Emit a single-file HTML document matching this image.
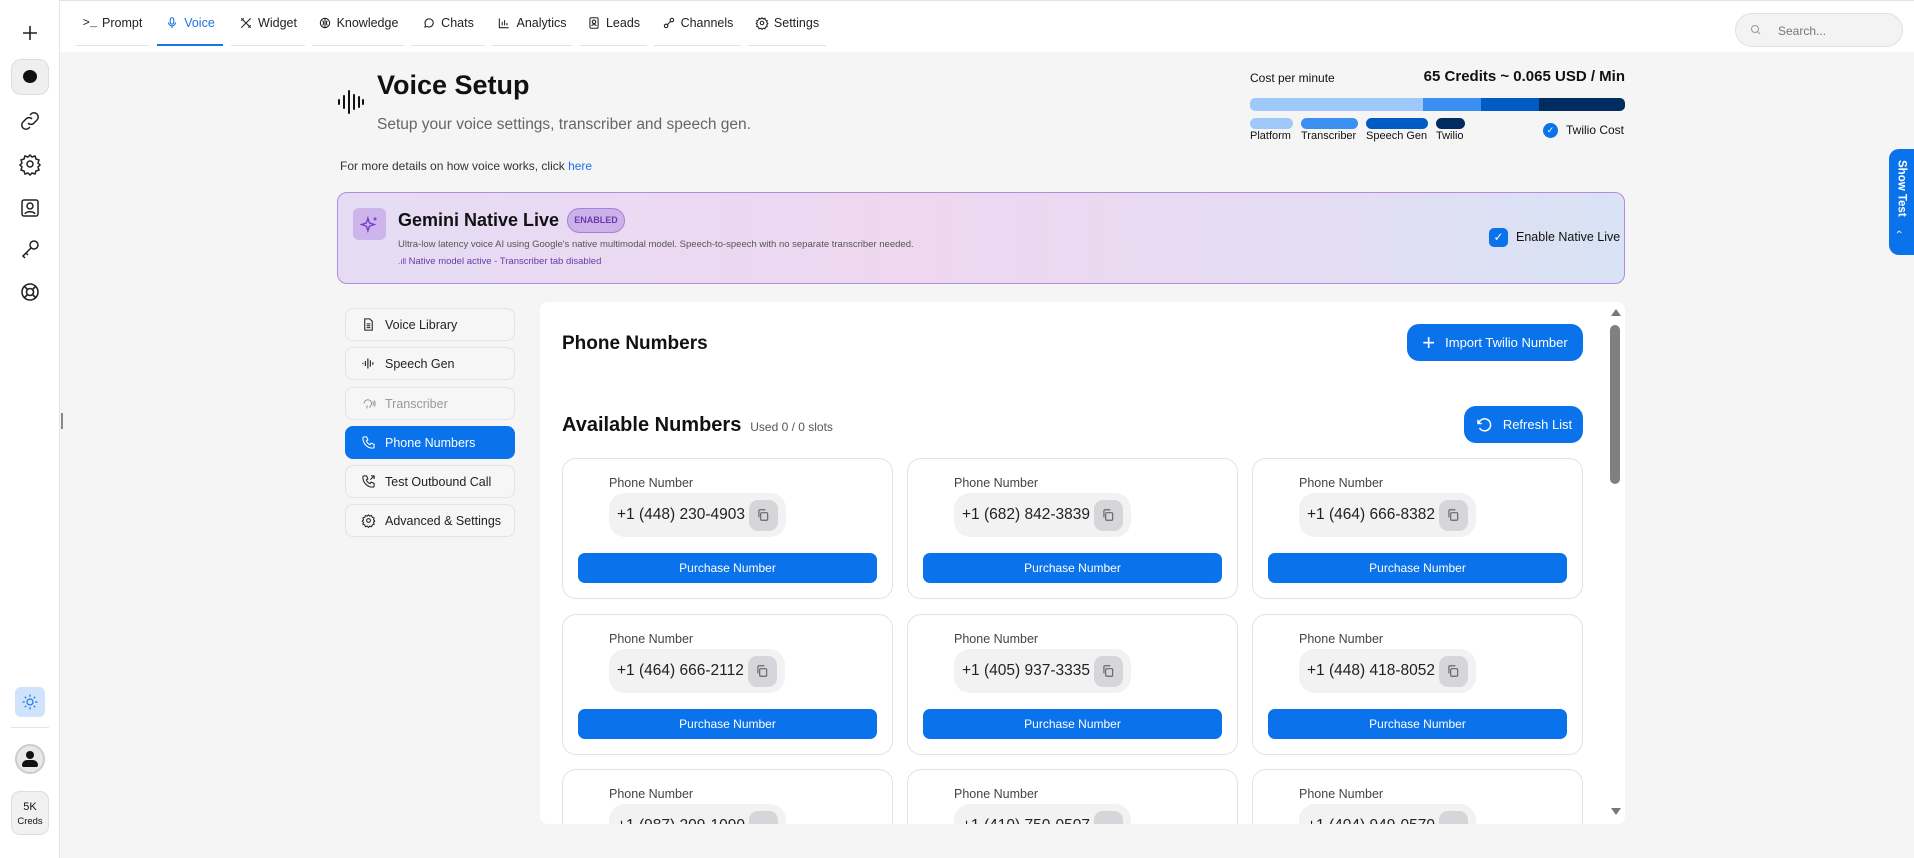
<!DOCTYPE html>
<html style="overflow:hidden;width:1914px;height:858px"><head><meta charset="utf-8"><style>
*{box-sizing:border-box;margin:0;padding:0}
body{width:1914px;height:858px;overflow:hidden;background:#f5f5f5;font-family:"Liberation Sans",sans-serif;color:#111;position:relative}
.abs{position:absolute}
.side{left:0;top:0;width:60px;height:858px;background:#fff;border-right:1px solid #e5e5e5}
.top{left:60px;top:0;width:1854px;height:52px;background:#fff;border-top:1px solid #e3e3e3}
.tab{position:absolute;top:0;height:45px;display:flex;align-items:center;justify-content:center;gap:5px;font-size:12.5px;color:#222;border-bottom:1px solid #e3e3e3}
.tab.on{color:#1a73e8;border-bottom:2px solid #1a73e8}
.tab svg{width:14px;height:14px}
.nav{position:absolute;left:345px;width:170px;height:33px;border:1px solid #e3e3e3;border-radius:8px;display:flex;align-items:center;padding-left:15px;gap:9px;font-size:12.5px;color:#222;background:#f6f6f6}
.nav svg{width:15px;height:15px}
.nav.on{background:#0a72ea;color:#fff;border-color:#0a72ea}
.nav.dis{color:#999}
.card{position:absolute;width:331px;height:141px;border:1px solid #e2e2e2;border-radius:14px;background:#fff}
.card .lb{position:absolute;left:46px;top:17px;font-size:12.5px;color:#444}
.card .pill{position:absolute;left:46px;top:34px;height:44px;border-radius:16px;background:#f2f2f2;display:flex;align-items:center;padding:0 8px 0 8px;gap:4px;font-size:15.5px;color:#222}
.card .cp{width:29px;height:31px;border-radius:9px;background:#d6d6da;display:flex;align-items:center;justify-content:center}
.card .btn{position:absolute;left:15px;right:15px;top:94px;height:30px;border-radius:7px;background:#0a72ea;color:#fff;font-size:12px;display:flex;align-items:center;justify-content:center}
.bbtn{position:absolute;background:#0a72ea;color:#fff;border-radius:12px;display:flex;align-items:center;justify-content:center;gap:10px;font-size:13px}
.ic{position:absolute;left:18px;width:24px;height:24px}
</style></head><body>
<div class="abs side">
 <svg class="ic" style="top:21px" viewBox="0 0 24 24"><path d="M12 5v14M5 12h14" stroke="#222" stroke-width="1.6"/></svg>
 <div class="abs" style="left:11px;top:59px;width:38px;height:36px;border-radius:10px;background:#efefef;border:1px solid #ddd"></div>
 <div class="abs" style="left:23px;top:70px;width:14px;height:13px;border-radius:50%;background:#111"></div>
 <svg class="ic" style="top:109px" viewBox="0 0 24 24" fill="none" stroke="#222" stroke-width="1.5"><path d="M10 14a4 4 0 0 0 6 0l3-3a4 4 0 0 0-6-6l-1 1M14 10a4 4 0 0 0-6 0l-3 3a4 4 0 0 0 6 6l1-1"/></svg>
 <svg class="ic" style="top:152px" viewBox="0 0 24 24" fill="none" stroke="#222" stroke-width="1.5"><circle cx="12" cy="12" r="3"/><path d="M12 3l2 2 3-1 1 3 3 1-1 3 2 2-2 2 1 3-3 1-1 3-3-1-2 2-2-2-3 1-1-3-3-1 1-3-2-2 2-2-1-3 3-1 1-3 3 1z"/></svg>
 <svg class="ic" style="top:196px" viewBox="0 0 24 24" fill="none" stroke="#222" stroke-width="1.5"><rect x="4" y="4" width="16" height="16" rx="2"/><circle cx="12" cy="10" r="3"/><path d="M7 18c1-3 9-3 10 0"/></svg>
 <svg class="ic" style="top:237px" viewBox="0 0 24 24" fill="none" stroke="#222" stroke-width="1.5"><circle cx="16" cy="8" r="4"/><path d="M13 11l-8 8 2 2M8 16l2 2"/></svg>
 <svg class="ic" style="top:280px" viewBox="0 0 24 24" fill="none" stroke="#222" stroke-width="1.6"><circle cx="12" cy="12" r="8"/><circle cx="12" cy="12" r="3.5"/><path d="M6 6l3.5 3.5M18 6l-3.5 3.5M6 18l3.5-3.5M18 18l-3.5-3.5"/></svg>
 <div class="abs" style="left:15px;top:687px;width:30px;height:30px;border-radius:6px;background:#cfe3fb"></div>
 <svg class="abs" style="left:21px;top:693px;width:18px;height:18px" viewBox="0 0 24 24" fill="none" stroke="#1a73e8" stroke-width="1.6"><circle cx="12" cy="12" r="4"/><path d="M12 2v3M12 19v3M2 12h3M19 12h3M5 5l2 2M17 17l2 2M5 19l2-2M17 7l2-2"/></svg>
 <div class="abs" style="left:11px;top:727px;width:38px;height:1px;background:#e5e5e5"></div>
 <div class="abs" style="left:15px;top:744px;width:30px;height:30px;border-radius:50%;border:2px solid #ccc;background:#e8e8e8"></div>
 <div class="abs" style="left:26px;top:751px;width:8px;height:8px;border-radius:50%;background:#111"></div>
 <div class="abs" style="left:22px;top:760px;width:16px;height:7px;border-radius:8px 8px 3px 3px;background:#111"></div>
 <div class="abs" style="left:11px;top:791px;width:38px;height:44px;border-radius:9px;background:#f1f1f1;border:1px solid #ddd;font-size:11px;text-align:center;line-height:14px;padding-top:8px">5K<br><span style="font-size:9.5px">Creds</span></div>
</div>
<div class="abs" style="left:61px;top:413px;width:2px;height:16px;background:#888"></div>
<div class="abs top">
 <div class="tab" style="left:16px;width:73px"><span style="font-family:'Liberation Mono';font-size:12px">&gt;_</span>Prompt</div>
 <div class="tab on" style="left:97px;width:66px"><svg viewBox="0 0 24 24" fill="none" stroke="#1a73e8" stroke-width="1.8"><rect x="9" y="3" width="6" height="11" rx="3"/><path d="M6 11a6 6 0 0 0 12 0M12 17v4"/></svg>Voice</div>
 <div class="tab" style="left:171px;width:74px"><svg viewBox="0 0 24 24" fill="none" stroke="#222" stroke-width="1.8"><path d="M4 4l16 16M20 4L4 20M4 8l4-4M16 20l4-4"/></svg>Widget</div>
 <div class="tab" style="left:252px;width:92px"><svg viewBox="0 0 24 24" fill="none" stroke="#222" stroke-width="1.8"><circle cx="12" cy="12" r="8"/><path d="M12 4v16M8 8c2 2 2 6 0 8M16 8c-2 2-2 6 0 8"/></svg>Knowledge</div>
 <div class="tab" style="left:351px;width:74px"><svg viewBox="0 0 24 24" fill="none" stroke="#222" stroke-width="1.8"><path d="M5 19l1-4a7 7 0 1 1 3 3z"/></svg>Chats</div>
 <div class="tab" style="left:432px;width:80px"><svg viewBox="0 0 24 24" fill="none" stroke="#222" stroke-width="1.8"><path d="M4 4v16h16M9 16v-6M13 16V7M17 16v-4"/></svg>Analytics</div>
 <div class="tab" style="left:520px;width:67px"><svg viewBox="0 0 24 24" fill="none" stroke="#222" stroke-width="1.8"><rect x="5" y="3" width="14" height="18" rx="2"/><circle cx="12" cy="10" r="3"/><path d="M8 17c1-3 7-3 8 0"/></svg>Leads</div>
 <div class="tab" style="left:594px;width:87px"><svg viewBox="0 0 24 24" fill="none" stroke="#222" stroke-width="1.8"><circle cx="7" cy="17" r="3"/><circle cx="17" cy="7" r="3"/><path d="M9 15l6-6"/></svg>Channels</div>
 <div class="tab" style="left:688px;width:78px"><svg viewBox="0 0 24 24" fill="none" stroke="#222" stroke-width="1.8"><circle cx="12" cy="12" r="3"/><path d="M12 3l2 2 3-1 1 3 3 1-1 3 2 2-2 2 1 3-3 1-1 3-3-1-2 2-2-2-3 1-1-3-3-1 1-3-2-2 2-2-1-3 3-1 1-3 3 1z"/></svg>Settings</div>
 <div class="abs" style="left:1675px;top:12px;width:168px;height:34px;border-radius:17px;background:#f3f3f3;border:1px solid #e0e0e0;font-size:12px;color:#777;padding:10px 0 0 42px">Search...</div>
 <svg class="abs" style="left:1690px;top:23px;width:12px;height:12px" viewBox="0 0 24 24" fill="none" stroke="#999" stroke-width="2"><circle cx="10" cy="10" r="7"/><path d="M15 15l5 5"/></svg>
</div>

<svg class="abs" style="left:337px;top:88px;width:28px;height:28px" viewBox="0 0 28 28" stroke="#111" stroke-width="2" stroke-linecap="round"><path d="M2 12v4M7 8v12M12 3v22M17 7v14M22 9v10M26 12v4"/></svg>
<div class="abs" style="left:377px;top:70px;font-size:27px;font-weight:bold">Voice Setup</div>
<div class="abs" style="left:377px;top:116px;font-size:15.5px;color:#666">Setup your voice settings, transcriber and speech gen.</div>
<div class="abs" style="left:340px;top:159px;font-size:12px;color:#333">For more details on how voice works, click <span style="color:#1a73e8">here</span></div>

<div class="abs" style="left:1250px;top:71px;font-size:12px">Cost per minute</div>
<div class="abs" style="left:1300px;top:68px;width:325px;text-align:right;font-size:15px;font-weight:bold">65 Credits ~ 0.065 USD / Min</div>
<div class="abs" style="left:1250px;top:98px;width:375px;height:13px;border-radius:5px;overflow:hidden;display:flex">
 <div style="width:173px;background:#9ec9fa"></div><div style="width:58px;background:#3a8ff0"></div><div style="width:58px;background:#005bc4"></div><div style="flex:1;background:#002c5f"></div></div>
<div class="abs" style="left:1250px;top:118px;width:43px;height:11px;border-radius:6px;background:#9ec9fa"></div>
<div class="abs" style="left:1301px;top:118px;width:57px;height:11px;border-radius:6px;background:#3a8ff0"></div>
<div class="abs" style="left:1366px;top:118px;width:62px;height:11px;border-radius:6px;background:#005bc4"></div>
<div class="abs" style="left:1436px;top:118px;width:29px;height:11px;border-radius:6px;background:#002c5f"></div>
<div class="abs" style="left:1250px;top:130px;font-size:11px">Platform</div>
<div class="abs" style="left:1301px;top:130px;font-size:11px">Transcriber</div>
<div class="abs" style="left:1366px;top:130px;font-size:11px">Speech Gen</div>
<div class="abs" style="left:1436px;top:130px;font-size:11px">Twilio</div>
<div class="abs" style="left:1543px;top:123px;width:15px;height:15px;border-radius:50%;background:#0a72ea;color:#fff;font-size:9px;text-align:center;line-height:15px">✓</div>
<div class="abs" style="left:1566px;top:123px;font-size:12px">Twilio Cost</div>

<div class="abs" style="left:337px;top:192px;width:1288px;height:92px;border:1px solid #b48be0;border-radius:10px;background:linear-gradient(90deg,#e5dcf4 0%,#eed7ef 45%,#e4dcf2 75%,#d8e3f5 100%)"></div>
<div class="abs" style="left:353px;top:208px;width:33px;height:32px;border-radius:6px;background:#cdb5ec"></div>
<svg class="abs" style="left:360px;top:215px;width:19px;height:19px" viewBox="0 0 24 24" fill="none" stroke="#7b3fc9" stroke-width="1.8"><path d="M10 4l2 6 6 2-6 2-2 6-2-6-6-2 6-2z"/><path d="M19 3v4M17 5h4"/></svg>
<div class="abs" style="left:398px;top:208px;display:flex;align-items:center;gap:8px">
 <span style="font-size:18px;font-weight:bold">Gemini Native Live</span>
 <span style="width:58px;height:25px;border-radius:13px;background:#cdb2ea;border:1px solid #a77fdc;color:#6b3aa8;font-size:9px;font-weight:bold;text-align:center;line-height:23px">ENABLED</span>
</div>
<div class="abs" style="left:398px;top:239px;font-size:9.5px;color:#555">Ultra-low latency voice AI using Google's native multimodal model. Speech-to-speech with no separate transcriber needed.</div>
<div class="abs" style="left:398px;top:256px;font-size:9.5px;color:#6b3aa8"><span style="font-size:8px">.ıll</span> Native model active - Transcriber tab disabled</div>
<div class="abs" style="left:1489px;top:228px;width:19px;height:19px;border-radius:5px;background:#0a72ea;color:#fff;font-size:12px;text-align:center;line-height:19px">✓</div>
<div class="abs" style="left:1516px;top:230px;font-size:12.5px">Enable Native Live</div>

<div class="nav" style="top:308px"><svg viewBox="0 0 24 24" fill="none" stroke="#222" stroke-width="1.7"><path d="M6 3h8l4 4v14H6zM9 11h6M9 14h6M9 17h6"/></svg>Voice Library</div>
<div class="nav" style="top:347px"><svg viewBox="0 0 24 24" stroke="#222" stroke-width="1.8"><path d="M3 11v2M7 8v8M11 4v16M15 7v10M19 10v4"/></svg>Speech Gen</div>
<div class="nav dis" style="top:387px"><svg viewBox="0 0 24 24" fill="none" stroke="#999" stroke-width="1.7"><path d="M5 12a6 6 0 0 1 12 0c0 3-3 4-3 7M9 20l1-5M19 9c1 2 1 4 0 6M21 7c2 3 2 7 0 10"/></svg>Transcriber</div>
<div class="nav on" style="top:426px"><svg viewBox="0 0 24 24" fill="none" stroke="#fff" stroke-width="1.7"><path d="M5 3h4l2 5-2.5 1.5a11 11 0 0 0 6 6L16 13l5 2v4a2 2 0 0 1-2 2A16 16 0 0 1 3 5a2 2 0 0 1 2-2"/></svg>Phone Numbers</div>
<div class="nav" style="top:465px"><svg viewBox="0 0 24 24" fill="none" stroke="#222" stroke-width="1.7"><path d="M5 3h4l2 5-2.5 1.5a11 11 0 0 0 6 6L16 13l5 2v4a2 2 0 0 1-2 2A16 16 0 0 1 3 5a2 2 0 0 1 2-2M15 9l6-6M16 3h5v5"/></svg>Test Outbound Call</div>
<div class="nav" style="top:504px"><svg viewBox="0 0 24 24" fill="none" stroke="#222" stroke-width="1.7"><circle cx="12" cy="12" r="3"/><path d="M12 3l2 2 3-1 1 3 3 1-1 3 2 2-2 2 1 3-3 1-1 3-3-1-2 2-2-2-3 1-1-3-3-1 1-3-2-2 2-2-1-3 3-1 1-3 3 1z"/></svg>Advanced &amp; Settings</div>

<div class="abs" style="left:540px;top:302px;width:1085px;height:522px;background:#fff;border-radius:8px;overflow:hidden">
 <div class="abs" style="left:22px;top:31px;font-size:19px;font-weight:bold">Phone Numbers</div>
 <div class="bbtn" style="left:867px;top:22px;width:176px;height:37px"><span style="font-size:22px;font-weight:300">+</span>Import Twilio Number</div>
 <div class="abs" style="left:22px;top:112px;font-size:20px;font-weight:bold">Available Numbers <span style="font-size:12px;font-weight:normal;color:#555">&nbsp;Used 0 / 0 slots</span></div>
 <div class="bbtn" style="left:924px;top:104px;width:119px;height:37px"><svg width="18" height="18" viewBox="0 0 24 24" fill="none" stroke="#fff" stroke-width="2"><path d="M4 5v5h5"/><path d="M5 10a8 8 0 1 1 1 6"/></svg>Refresh List</div>
 <div class="abs" style="left:1071px;top:7px;width:0;height:0;border-left:5px solid transparent;border-right:5px solid transparent;border-bottom:7px solid #777"></div>
 <div class="abs" style="left:1070px;top:23px;width:10px;height:159px;border-radius:5px;background:#808080"></div>
 <div class="abs" style="left:1071px;top:506px;width:0;height:0;border-left:5px solid transparent;border-right:5px solid transparent;border-top:7px solid #777"></div>

 <div class="card" style="left:22px;top:156px"><div class="lb">Phone Number</div><div class="pill">+1 (448) 230-4903<div class="cp"><svg width="14" height="14" viewBox="0 0 24 24" fill="none" stroke="#666" stroke-width="2"><rect x="8" y="8" width="12" height="13" rx="2"/><path d="M5 16V5a2 2 0 0 1 2-2h9"/></svg></div></div><div class="btn">Purchase Number</div></div>
 <div class="card" style="left:367px;top:156px"><div class="lb">Phone Number</div><div class="pill">+1 (682) 842-3839<div class="cp"><svg width="14" height="14" viewBox="0 0 24 24" fill="none" stroke="#666" stroke-width="2"><rect x="8" y="8" width="12" height="13" rx="2"/><path d="M5 16V5a2 2 0 0 1 2-2h9"/></svg></div></div><div class="btn">Purchase Number</div></div>
 <div class="card" style="left:712px;top:156px"><div class="lb">Phone Number</div><div class="pill">+1 (464) 666-8382<div class="cp"><svg width="14" height="14" viewBox="0 0 24 24" fill="none" stroke="#666" stroke-width="2"><rect x="8" y="8" width="12" height="13" rx="2"/><path d="M5 16V5a2 2 0 0 1 2-2h9"/></svg></div></div><div class="btn">Purchase Number</div></div>

 <div class="card" style="left:22px;top:312px"><div class="lb">Phone Number</div><div class="pill">+1 (464) 666-2112<div class="cp"><svg width="14" height="14" viewBox="0 0 24 24" fill="none" stroke="#666" stroke-width="2"><rect x="8" y="8" width="12" height="13" rx="2"/><path d="M5 16V5a2 2 0 0 1 2-2h9"/></svg></div></div><div class="btn">Purchase Number</div></div>
 <div class="card" style="left:367px;top:312px"><div class="lb">Phone Number</div><div class="pill">+1 (405) 937-3335<div class="cp"><svg width="14" height="14" viewBox="0 0 24 24" fill="none" stroke="#666" stroke-width="2"><rect x="8" y="8" width="12" height="13" rx="2"/><path d="M5 16V5a2 2 0 0 1 2-2h9"/></svg></div></div><div class="btn">Purchase Number</div></div>
 <div class="card" style="left:712px;top:312px"><div class="lb">Phone Number</div><div class="pill">+1 (448) 418-8052<div class="cp"><svg width="14" height="14" viewBox="0 0 24 24" fill="none" stroke="#666" stroke-width="2"><rect x="8" y="8" width="12" height="13" rx="2"/><path d="M5 16V5a2 2 0 0 1 2-2h9"/></svg></div></div><div class="btn">Purchase Number</div></div>

 <div class="card" style="left:22px;top:467px"><div class="lb">Phone Number</div><div class="pill">+1 (987) 209-1090<div class="cp"></div></div></div>
 <div class="card" style="left:367px;top:467px"><div class="lb">Phone Number</div><div class="pill">+1 (410) 750-0507<div class="cp"></div></div></div>
 <div class="card" style="left:712px;top:467px"><div class="lb">Phone Number</div><div class="pill">+1 (404) 949-0570<div class="cp"></div></div></div>
</div>

<div class="abs" style="left:1889px;top:149px;width:25px;height:106px;border-radius:10px 0 0 10px;background:#0a72ea"></div>
<div class="abs" style="left:1889px;top:160px;width:25px;height:60px;writing-mode:vertical-rl;color:#fff;font-size:11.5px;font-weight:bold;display:flex;align-items:center">Show Test</div>
<div class="abs" style="left:1897px;top:226px;color:#fff;font-size:11px;transform:rotate(90deg)">‹</div>
</body></html>
